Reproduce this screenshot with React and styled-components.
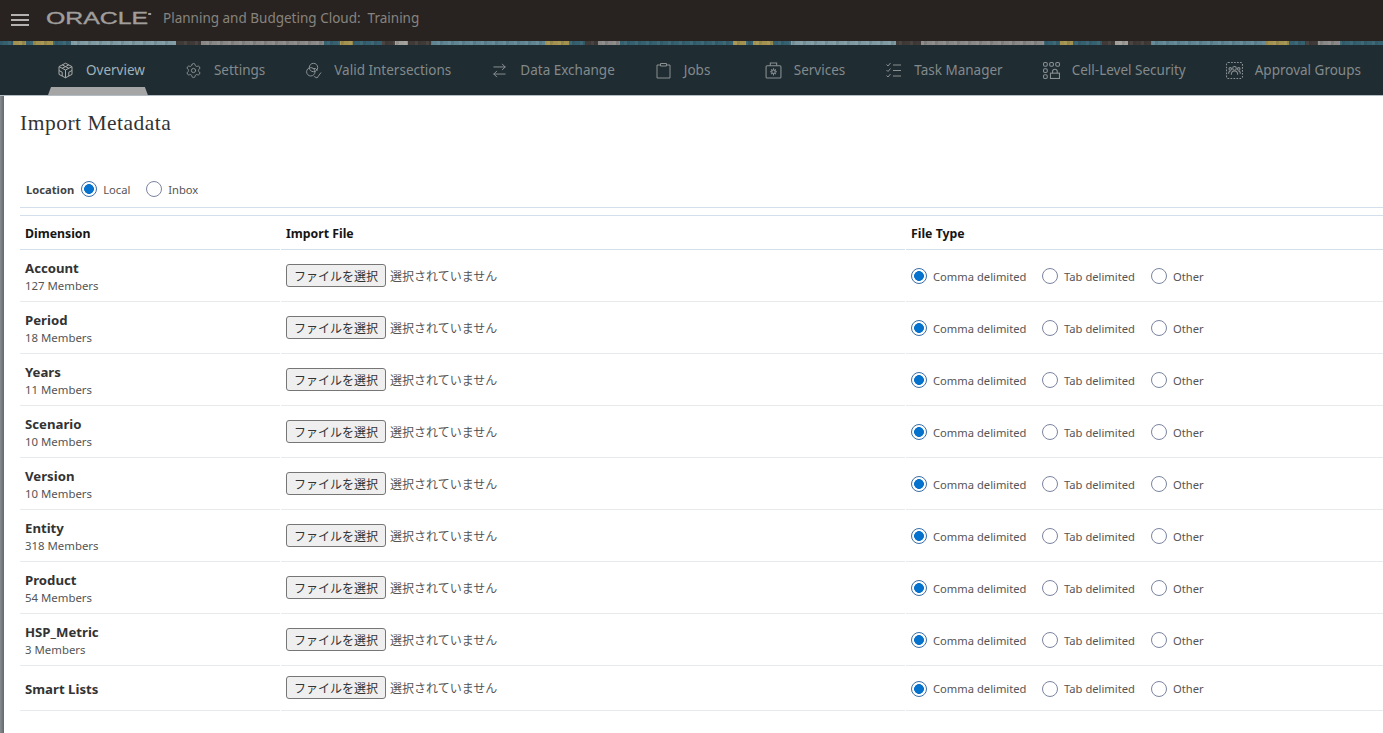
import React from 'react';
import styled, { createGlobalStyle } from 'styled-components';
import { Settings, ArrowRightLeft } from 'lucide-react';

const GlobalStyle = createGlobalStyle`
  html, body {
    margin: 0;
    padding: 0;
    height: 100%;
    overflow: hidden;
    background: #fff;
    font-family: "Noto Sans", "Noto Sans CJK JP", sans-serif;
  }
`;

const Page = styled.div`
  width: 100vw;
  height: 100vh;
  display: flex;
  flex-direction: column;
  overflow: hidden;
`;

const Header = styled.header`
  height: 41px;
  background: #282320;
  display: flex;
  align-items: center;
  padding-left: 11px;
  flex: none;
`;

const Burger = styled.div`
  width: 18px;
  height: 12px;
  display: flex;
  flex-direction: column;
  justify-content: space-between;
  margin-right: 17px;
  margin-top: -1px;

  span {
    height: 2px;
    background: #b4b2b0;
  }
`;

// natural width is about 70px, stretched out to the wide logo letters
const Logo = styled.div`
  position: relative;
  width: 70px;
  margin-right: 47px;
  margin-top: -4px;
  font-family: "Liberation Sans", sans-serif;
  font-size: 17px;
  line-height: 20px;
  color: #a09e9c;
  transform: scaleX(1.46);
  transform-origin: left center;
  white-space: nowrap;
  -webkit-text-stroke: 0.35px #a09e9c;

  &::after {
    content: '';
    position: absolute;
    right: -1.5px;
    top: 4px;
    width: 1.5px;
    height: 2px;
    background: #a09e9c;
  }
`;

const AppTitle = styled.div`
  font-size: 13.5px;
  color: #87847f;
  white-space: pre;
  margin-top: -6px;
`;

// the decorative photo strip under the header, approximated with colour bands
const Strip = styled.div`
  height: 4px;
  flex: none;
  background-size: 11px 4px, 720px 4px;
  background-image:
    repeating-linear-gradient(100deg, rgba(30, 40, 45, 0.12) 0 3px, transparent 3px 8px, rgba(255, 255, 255, 0.05) 8px 11px),
    linear-gradient(90deg,
      #34606f 0 13px, #a3924f 13px 26px, #34606f 26px 33px, #a3924f 33px 53px,
      #34606f 53px 71px, #7f9aa2 71px 176px, #3f3937 176px 201px, #8a8886 201px 324px,
      #34606f 324px 340px, #a3924f 340px 353px, #34606f 353px 382px, #3f3937 382px 395px,
      #a09e9b 395px 408px, #3f3937 408px 431px, #5f8593 431px 545px, #a3924f 545px 569px,
      #34606f 569px 585px, #3f3937 585px 598px, #8a8886 598px 620px, #34606f 620px 720px);
`;

const Nav = styled.nav`
  height: 50px;
  flex: none;
  background: #1f2c31;
  border-bottom: 1px solid #b4bdc4;
  display: flex;
  align-items: center;
  padding-left: 57px;
  gap: 40px;
  white-space: nowrap;
`;

const NavItem = styled.div`
  position: relative;
  height: 100%;
  min-width: ${p => p.$minWidth || 0}px;
  display: flex;
  align-items: center;
  gap: 12px;
  font-size: 13.5px;
  color: ${p => (p.$active ? '#9fb1bb' : '#838a8d')};

  svg {
    flex: none;
    width: 17px;
    height: 17px;
    color: ${p => (p.$active ? '#a9a9a9' : '#8a9093')};
  }

  ${p => p.$active && `
    &::after {
      content: '';
      position: absolute;
      left: -9px;
      right: -3px;
      bottom: 0;
      height: 8px;
      background: #a5a5a5;
      clip-path: polygon(3px 0, calc(100% - 3px) 0, 100% 100%, 0 100%);
    }
  `}
`;

const Body = styled.div`
  flex: 1;
  display: flex;
  min-height: 0;
`;

const Rail = styled.div`
  width: 4px;
  flex: none;
  background: linear-gradient(90deg, #868c90, #62686c);
`;

const Main = styled.main`
  flex: 1;
  padding-left: 16px;
`;

const Title = styled.h1`
  margin: 0;
  height: 74px;
  padding-top: 14px;
  box-sizing: border-box;
  font-family: "Liberation Serif", serif;
  font-weight: 400;
  font-size: 21.5px;
  letter-spacing: 0.5px;
  line-height: 26px;
  color: #333;
`;

const LocationRow = styled.div`
  height: 38px;
  box-sizing: border-box;
  padding: 1px 0 0 6px;
  border-bottom: 1px solid #d3dfea;
  display: flex;
  align-items: center;
`;

const LocationLabel = styled.span`
  font-weight: 700;
  font-size: 11.2px;
  color: #444;
  margin-right: 7px;
`;

const Radio = styled.input.attrs({ type: 'radio' })`
  appearance: none;
  margin: 0 6px 0 0;
  width: 16px;
  height: 16px;
  flex: none;
  border-radius: 50%;
  border: 1px solid #7c84a0;
  background: #fff;

  &:checked {
    border-color: #3a6ea5;
    background: radial-gradient(circle, #0572ce 0 4.6px, #fff 5.2px);
  }
`;

const RadioLabel = styled.label`
  display: flex;
  align-items: center;
  width: ${p => p.$width}px;
  font-size: 11.2px;
  color: #555;
  white-space: nowrap;
`;

const Table = styled.div`
  margin-top: 7px;
  border-top: 1px solid #d3dfea;
`;

const Row = styled.div`
  display: grid;
  grid-template-columns: 260px 624px 1fr;
  column-gap: 1px;
  height: ${p => p.$height}px;
`;

const Cell = styled.div`
  display: flex;
  align-items: center;
  padding: 1px 0 0 5px;
  border-bottom: 1px solid #e8ebee;
  min-width: 0;
`;

const HeadCell = styled(Cell)`
  border-bottom-color: #d3dfea;
  font-size: 12.3px;
  font-weight: 700;
  color: #161513;
`;

const NameCell = styled(Cell)`
  padding-top: 2px;
  flex-direction: column;
  align-items: flex-start;
  justify-content: center;
`;

const Name = styled.div`
  font-size: 13.2px;
  line-height: 17px;
  font-weight: 700;
  color: #333;
`;

const Members = styled.div`
  font-size: 11.4px;
  line-height: 17px;
  color: #555;
`;

const FileGroup = styled.div`
  display: flex;
  align-items: center;
  margin-top: -2px;
`;

const FileButton = styled.button`
  width: 100px;
  height: 23px;
  box-sizing: border-box;
  padding: 0;
  flex: none;
  border: 1px solid #767676;
  border-radius: 3px;
  background: #efefef;
  font-family: "Noto Sans CJK JP", sans-serif;
  font-size: 12px;
  color: #333;
`;

const NoFile = styled.span`
  margin-left: 4px;
  font-family: "Noto Sans CJK JP", sans-serif;
  font-size: 12px;
  color: #555;
`;

const CubeIcon = () => (
  <svg viewBox="0 0 17 17" fill="none" stroke="currentColor" strokeWidth="1">
    <path d="M8.5 1.2 15 4.6v7.8l-6.5 3.4L2 12.4V4.6z" />
    <path d="M2 4.6 8.5 8 15 4.6M8.5 8v7.8M5.2 2.9l6.6 3.4M11.8 2.9 5.2 6.3M2 8.5l3.2 1.7v3.8M15 8.5l-3.2 1.7v3.8" />
  </svg>
);

// three overlapping circles with a check mark at the lower right
const IntersectIcon = () => (
  <svg viewBox="0 0 17 17" fill="none" stroke="currentColor" strokeWidth="1">
    <circle cx="8.500" cy="5.500" r="4.200" />
    <circle cx="5.800" cy="9.800" r="4.200" />
    <path d="M7.500 6.600a4.200 4.200 0 0 1 5 1.800" />
    <path d="M9.200 14.500 12 16l4-5.500" />
  </svg>
);

const JobsIcon = () => (
  <svg viewBox="0 0 16 17" fill="none" stroke="currentColor" strokeWidth="1">
    <path d="M5 3H1.500v13h13V3H11" />
    <path d="M5 4V1.500h6V4z" />
  </svg>
);

const ServicesIcon = () => (
  <svg viewBox="0 0 16 16" fill="none" stroke="currentColor" strokeWidth="1">
    <rect x="1" y="3.500" width="14" height="11.500" rx="1" />
    <path d="M5 3.500V1h6v2.500" />
    <circle cx="8" cy="9.200" r="1.600" />
    <path d="M8 5.800v1.400M8 11.200v1.400M4.800 9.200h1.400M9.800 9.200h1.400M5.800 7l1 1M9.200 10.400l1 1M10.200 7l-1 1M6.800 10.400l-1 1" />
  </svg>
);

const TaskIcon = () => (
  <svg viewBox="0 0 17 17" fill="none" stroke="currentColor" strokeWidth="1">
    <path d="M1.500 2.500 3 4l2.500-3M1.500 8 3 9.500 5.500 6.500M1.500 13.500 3 15l2.500-3" />
    <path d="M8 3h8M8 8.500h8M8 14h8" />
  </svg>
);

const CellSecurityIcon = () => (
  <svg viewBox="0 0 16 16" fill="none" stroke="currentColor" strokeWidth="1">
    <rect x="0.500" y="0.500" width="3.500" height="3.500" rx="1.200" />
    <rect x="6.300" y="0.500" width="3.500" height="3.500" rx="1.200" />
    <rect x="12" y="0.500" width="3.500" height="3.500" rx="1.200" />
    <rect x="0.500" y="6.300" width="3.500" height="3.500" rx="1.200" />
    <rect x="0.500" y="12" width="3.500" height="3.500" rx="1.200" />
    <rect x="7" y="10.500" width="8.500" height="5" />
    <path d="M9 10.500V9a2.200 2.200 0 0 1 4.400 0v1.500" />
  </svg>
);

const ApprovalIcon = () => (
  <svg viewBox="0 0 16 16" fill="none" stroke="currentColor" strokeWidth="1">
    <rect x="0.500" y="0.500" width="15" height="15" rx="1.500" strokeDasharray="1.600 1.200" />
    <circle cx="8" cy="6" r="1.700" />
    <path d="M5 12c0-2 1.200-3.500 3-3.500s3 1.500 3 3.500" />
    <circle cx="4" cy="6.500" r="1.200" />
    <circle cx="12" cy="6.500" r="1.200" />
    <path d="M2.500 11c0-1.500.6-2.500 1.800-2.500M13.500 11c0-1.500-.6-2.500-1.800-2.500" />
  </svg>
);

const navItems = [
  { label: 'Overview', icon: <CubeIcon />, active: true },
  { label: 'Settings', icon: <Settings strokeWidth={1.4} /> },
  { label: 'Valid Intersections', icon: <IntersectIcon /> },
  { label: 'Data Exchange', icon: <ArrowRightLeft strokeWidth={1.4} /> },
  { label: 'Jobs', icon: <JobsIcon />, minWidth: 70 },
  { label: 'Services', icon: <ServicesIcon /> },
  { label: 'Task Manager', icon: <TaskIcon /> },
  { label: 'Cell-Level Security', icon: <CellSecurityIcon /> },
  { label: 'Approval Groups', icon: <ApprovalIcon /> },
];

const dimensions = [
  { name: 'Account', members: 127 },
  { name: 'Period', members: 18 },
  { name: 'Years', members: 11 },
  { name: 'Scenario', members: 10 },
  { name: 'Version', members: 10 },
  { name: 'Entity', members: 318 },
  { name: 'Product', members: 54 },
  { name: 'HSP_Metric', members: 3 },
  { name: 'Smart Lists' },
];

function App() {
  return (
    <Page>
      <GlobalStyle />
      <Header>
        <Burger><span /><span /><span /></Burger>
        <Logo>ORACLE</Logo>
        <AppTitle>Planning and Budgeting Cloud:  Training</AppTitle>
      </Header>
      <Strip />
      <Nav>
        {navItems.map(item => (
          <NavItem key={item.label} $active={item.active} $minWidth={item.minWidth}>
            {item.icon}
            <span>{item.label}</span>
          </NavItem>
        ))}
      </Nav>
      <Body>
        <Rail />
        <Main>
          <Title>Import Metadata</Title>
          <LocationRow>
            <LocationLabel>Location</LocationLabel>
            <RadioLabel $width={65}><Radio name="location" defaultChecked />Local</RadioLabel>
            <RadioLabel $width={60}><Radio name="location" />Inbox</RadioLabel>
          </LocationRow>
          <Table>
            <Row $height={34}>
              <HeadCell>Dimension</HeadCell>
              <HeadCell>Import File</HeadCell>
              <HeadCell>File Type</HeadCell>
            </Row>
            {dimensions.map(dim => (
              <Row key={dim.name} $height={dim.members ? 52 : 45}>
                <NameCell>
                  <Name>{dim.name}</Name>
                  {dim.members && <Members>{dim.members} Members</Members>}
                </NameCell>
                <Cell>
                  <FileGroup>
                    <FileButton>ファイルを選択</FileButton>
                    <NoFile>選択されていません</NoFile>
                  </FileGroup>
                </Cell>
                <Cell>
                  <RadioLabel $width={131}><Radio name={dim.name} defaultChecked />Comma delimited</RadioLabel>
                  <RadioLabel $width={109}><Radio name={dim.name} />Tab delimited</RadioLabel>
                  <RadioLabel $width={60}><Radio name={dim.name} />Other</RadioLabel>
                </Cell>
              </Row>
            ))}
          </Table>
        </Main>
      </Body>
    </Page>
  );
}

export default App;
